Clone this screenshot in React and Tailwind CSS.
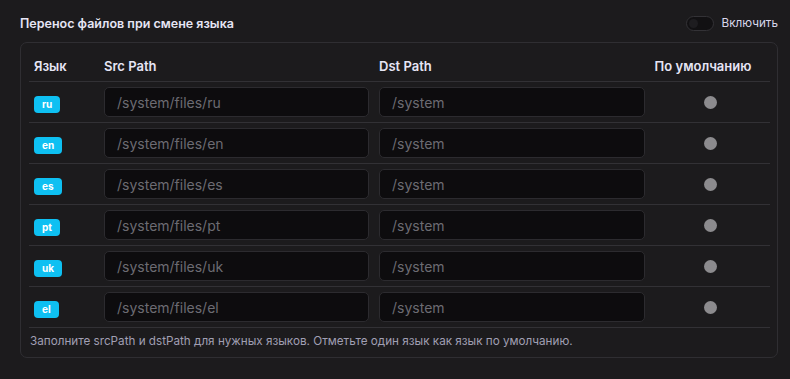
import React from "react";

const rows = ["ru", "en", "es", "pt", "uk", "el"];

export default function App() {
  return (
    <div className="w-[790px] h-[379px] bg-[#1c1b1d] pt-[14px] pl-[20px] pr-[12px] font-['Inter','Noto_Sans',sans-serif] text-[#e6e5f5]">
      <div className="flex items-center justify-between h-[20px] mb-[8px]">
        <div className="text-[12.5px] font-semibold">Перенос файлов при смене языка</div>
        <div className="flex items-center gap-[8px]">
          <div className="w-[28px] h-[15px] rounded-full bg-[#121113] border border-[#333236] relative">
            <div className="absolute left-[2px] top-[2px] w-[9px] h-[9px] rounded-full bg-[#1e1d20]" />
          </div>
          <span className="text-[11.7px] text-[#d8d7ea]">Включить</span>
        </div>
      </div>
      <div className="border border-[#2f2e32] rounded-[7px] pt-[9px] pb-[8px] pl-[8px] pr-[7px]">
        <div className="grid grid-cols-[70px_275px_276px_120px] items-center h-[30px] border-b border-[#323135] text-[13px] font-semibold">
          <div className="pl-[5px]">Язык</div>
          <div className="pl-[5px]">Src Path</div>
          <div className="pl-[5px]">Dst Path</div>
          <div className="text-center pr-[14px]">По умолчанию</div>
        </div>
        {rows.map((l) => (
          <div key={l} className="grid grid-cols-[70px_275px_276px_120px] items-center h-[41px] border-b border-[#323135]">
            <div className="pl-[5px]">
              <span className="inline-flex items-center justify-center h-[17px] px-[8px] rounded-[4px] bg-[#0ec0f2] text-white text-[10px] font-bold leading-none">{l}</span>
            </div>
            <div className="pl-[5px]">
              <div className="w-[265px] h-[30px] rounded-[5px] bg-[#0d0c0e] border border-[#2c2b2f] flex items-center pl-[12px] text-[14px] text-[#6c6b72]">/system/files/{l}</div>
            </div>
            <div className="pl-[5px]">
              <div className="w-[266px] h-[30px] rounded-[5px] bg-[#0d0c0e] border border-[#2c2b2f] flex items-center pl-[12px] text-[14px] text-[#6c6b72]">/system</div>
            </div>
            <div className="flex justify-center">
              <div className="w-[13px] h-[13px] rounded-full bg-[#8c8b8e]" />
            </div>
          </div>
        ))}
        <div className="mt-[5px] text-[11.7px] leading-[16px] text-[#a09fb3] pl-[1px]">
          Заполните srcPath и dstPath для нужных языков. Отметьте один язык как язык по умолчанию.
        </div>
      </div>
    </div>
  );
}
